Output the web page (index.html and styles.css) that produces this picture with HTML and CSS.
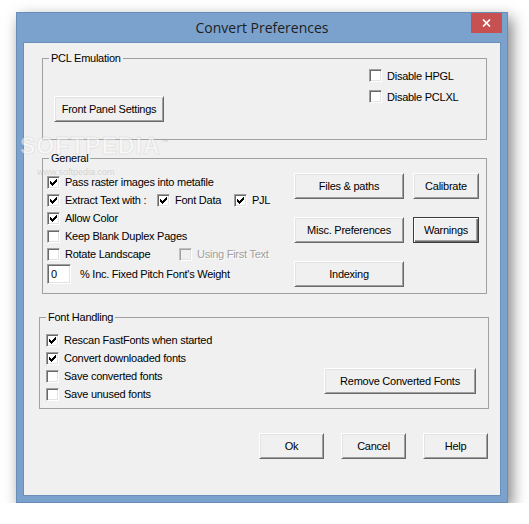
FILE: index.html
```html
<!DOCTYPE html>
<html lang="en">
    <head>
        <meta charset="UTF-8" />
        <meta name="viewport" content="width=device-width, initial-scale=1.0" />
        <title>Convert Preferences</title>
        <link rel="stylesheet" href="styles.css">
    </head>
    <body>
        <!-- dialog window -->
        <div class="window">
            <div class="titlebar">
                <span></span>
                <h1 class="title">Convert Preferences</h1>
                <a href="#" class="close-btn">
                    <svg width="9" height="8" viewBox="0 0 9 8">
                        <path d="M1 0.5L8 7.5M8 0.5L1 7.5" stroke="#fff" stroke-width="1.7" />
                    </svg>
                </a>
            </div>

            <div class="client">
                <!-- PCL Emulation -->
                <div class="group pcl">
                    <span class="group-label">PCL Emulation</span>
                    <button class="btn front-btn">Front Panel Settings</button>
                    <div class="pcl-opts">
                        <label class="chk"><span class="box"></span>Disable HPGL</label>
                        <label class="chk"><span class="box"></span>Disable PCLXL</label>
                    </div>
                </div>

                <!-- General -->
                <div class="group general">
                    <span class="group-label">General</span>
                    <div class="gen-list">
                        <label class="chk"><span class="box on"><svg class="tick" viewBox="0 0 7 7"><path d="M0 2h1v3H0zM1 3h1v3H1zM2 4h1v3H2zM3 3h1v3H3zM4 2h1v3H4zM5 1h1v3H5zM6 0h1v3H6z" /></svg></span>Pass raster images into metafile</label>
                        <div class="chk-row">
                            <label class="chk extract"><span class="box on"><svg class="tick" viewBox="0 0 7 7"><path d="M0 2h1v3H0zM1 3h1v3H1zM2 4h1v3H2zM3 3h1v3H3zM4 2h1v3H4zM5 1h1v3H5zM6 0h1v3H6z" /></svg></span>Extract Text with :</label>
                            <label class="chk font-data"><span class="box on"><svg class="tick" viewBox="0 0 7 7"><path d="M0 2h1v3H0zM1 3h1v3H1zM2 4h1v3H2zM3 3h1v3H3zM4 2h1v3H4zM5 1h1v3H5zM6 0h1v3H6z" /></svg></span>Font Data</label>
                            <label class="chk"><span class="box on"><svg class="tick" viewBox="0 0 7 7"><path d="M0 2h1v3H0zM1 3h1v3H1zM2 4h1v3H2zM3 3h1v3H3zM4 2h1v3H4zM5 1h1v3H5zM6 0h1v3H6z" /></svg></span>PJL</label>
                        </div>
                        <label class="chk"><span class="box on"><svg class="tick" viewBox="0 0 7 7"><path d="M0 2h1v3H0zM1 3h1v3H1zM2 4h1v3H2zM3 3h1v3H3zM4 2h1v3H4zM5 1h1v3H5zM6 0h1v3H6z" /></svg></span>Allow Color</label>
                        <label class="chk"><span class="box"></span>Keep Blank Duplex Pages</label>
                        <div class="chk-row">
                            <label class="chk rotate"><span class="box"></span>Rotate Landscape</label>
                            <label class="chk disabled"><span class="box dim"></span>Using First Text</label>
                        </div>
                        <div class="edit-row">
                            <span class="edit">0</span>
                            <span>% Inc. Fixed Pitch Font's Weight</span>
                        </div>
                    </div>
                    <div class="gen-btns">
                        <button class="btn">Files &amp; paths</button>
                        <button class="btn">Calibrate</button>
                        <button class="btn">Misc. Preferences</button>
                        <button class="btn default">Warnings</button>
                        <button class="btn">Indexing</button>
                    </div>
                </div>

                <!-- Font Handling -->
                <div class="group fonts">
                    <span class="group-label">Font Handling</span>
                    <div class="fonts-list">
                        <label class="chk"><span class="box on"><svg class="tick" viewBox="0 0 7 7"><path d="M0 2h1v3H0zM1 3h1v3H1zM2 4h1v3H2zM3 3h1v3H3zM4 2h1v3H4zM5 1h1v3H5zM6 0h1v3H6z" /></svg></span>Rescan FastFonts when started</label>
                        <label class="chk"><span class="box on"><svg class="tick" viewBox="0 0 7 7"><path d="M0 2h1v3H0zM1 3h1v3H1zM2 4h1v3H2zM3 3h1v3H3zM4 2h1v3H4zM5 1h1v3H5zM6 0h1v3H6z" /></svg></span>Convert downloaded fonts</label>
                        <label class="chk"><span class="box"></span>Save converted fonts</label>
                        <label class="chk"><span class="box"></span>Save unused fonts</label>
                    </div>
                    <button class="btn remove-btn">Remove Converted Fonts</button>
                </div>

                <!-- Ok / Cancel / Help -->
                <div class="dlg-btns">
                    <button class="btn">Ok</button>
                    <button class="btn">Cancel</button>
                    <button class="btn">Help</button>
                </div>
            </div>
        </div>

        <!-- watermark over the dialog -->
        <div class="watermark">SOFTPEDIA<sup>™</sup></div>
        <div class="watermark-url">www.softpedia.com</div>
    </body>
</html>
```

FILE: styles.css
```css
html,
body {
    margin: 0px;
    padding: 0px;
}

body {
    background: #fff;
    font-family: "Liberation Sans", Arial, sans-serif;
    font-size: 11px;
    letter-spacing: -0.25px;
    color: #000;
}

/* window frame */
.window {
    box-sizing: border-box;
    width: 492px;
    height: 491px;
    margin: 12px 0 0 16px;
    padding: 0 6px 6px;
    border: 1px solid #6a8db6;
    background: #7ba2cc;
    box-shadow: 4px 6px 14px rgba(0, 0, 0, 0.5);
    display: flex;
    flex-direction: column;
}

.titlebar {
    height: 29px;
    display: grid;
    grid-template-columns: 31px 1fr 31px;
}

.title {
    margin: 0;
    font-family: "Open Sans", "Noto Sans", sans-serif;
    font-weight: 400;
    font-size: 14px;
    letter-spacing: 0;
    line-height: 29px;
    text-align: center;
    color: #1e1e1e;
}

.close-btn {
    justify-self: end;
    width: 31px;
    height: 20px;
    margin-right: -1px;
    background: #c75050;
    display: flex;
    align-items: center;
    justify-content: center;
}

/* client area */
.client {
    flex: 1;
    box-sizing: border-box;
    border: 1px solid #6b8fb9;
    background: #f0f0f0;
}

/* group boxes */
.group {
    position: relative;
    box-sizing: border-box;
    border: 1px solid #a0a0a0;
    display: flex;
}

.group-label {
    position: absolute;
    top: -7px;
    left: 6px;
    padding: 0 2px;
    line-height: 13px;
    background: #f0f0f0;
}

.pcl {
    width: 445px;
    height: 82px;
    margin: 15px 0 0 18px;
    padding: 10px 0 0 11px;
}

.general {
    width: 445px;
    height: 136px;
    margin: 18px 0 0 18px;
    padding: 14px 0 0 4px;
}

.fonts {
    width: 450px;
    height: 92px;
    margin: 23px 0 0 15px;
    padding: 13px 0 0 6px;
}

/* buttons */
.btn {
    box-sizing: border-box;
    height: 26px;
    padding: 0;
    font: inherit;
    letter-spacing: inherit;
    color: #000;
    background: #f0f0f0;
    border: 1px solid;
    border-color: #fff #696969 #696969 #fff;
    box-shadow: inset 1px 1px #e3e3e3, inset -1px -1px #a0a0a0;
}

.btn.default {
    border-color: #3c3c3c;
    box-shadow: inset 1px 1px #fff, inset -1px -1px #696969, inset -2px -2px #a0a0a0;
}

.front-btn {
    width: 110px;
    margin-top: 27px;
}

/* checkboxes */
.chk {
    display: flex;
    align-items: center;
    gap: 5px;
    height: 18px;
    white-space: nowrap;
}

.box {
    flex: none;
    box-sizing: border-box;
    width: 13px;
    height: 13px;
    background: #fff;
    border: 1px solid;
    border-color: #a0a0a0 #fff #fff #a0a0a0;
    box-shadow: inset 1px 1px #696969, inset -1px -1px #e3e3e3;
    display: flex;
    align-items: center;
    justify-content: center;
}

.box.dim {
    background: #f0f0f0;
    border-color: #c0c0c0 #fff #fff #c0c0c0;
    box-shadow: inset 1px 1px #a0a0a0, inset -1px -1px #e3e3e3;
}

.tick {
    width: 7px;
    height: 7px;
    fill: #000;
    shape-rendering: crispEdges;
}

.chk.disabled {
    color: #a0a0a0;
    text-shadow: 1px 1px #fff;
}

.pcl-opts {
    margin-left: 205px;
    display: flex;
    flex-direction: column;
    gap: 8px;
}

.pcl-opts .chk {
    height: 13px;
}

/* general */
.gen-list {
    width: 247px;
}

.chk-row {
    display: flex;
    align-items: center;
    height: 18px;
}

.extract {
    width: 110px;
}

.font-data {
    width: 77px;
}

.rotate {
    width: 132px;
}

.edit-row {
    display: flex;
    align-items: center;
    gap: 9px;
    height: 20px;
    margin-top: 1px;
}

.edit {
    box-sizing: border-box;
    width: 24px;
    height: 20px;
    padding-left: 3px;
    line-height: 18px;
    background: #fff;
    border: 1px solid;
    border-color: #a0a0a0 #fff #fff #a0a0a0;
    box-shadow: inset 1px 1px #696969, inset -1px -1px #e3e3e3;
}

.gen-btns {
    display: grid;
    grid-template-columns: 110px 66px;
    grid-auto-rows: 26px;
    gap: 18px 9px;
    align-content: start;
}

/* font handling */
.fonts-list {
    width: 278px;
}

.remove-btn {
    width: 152px;
    margin-top: 37px;
}

/* bottom buttons */
.dlg-btns {
    display: flex;
    justify-content: flex-end;
    gap: 17px;
    margin: 24px 12px 0 0;
}

.dlg-btns .btn {
    width: 65px;
}

/* softpedia watermark */
.watermark {
    position: absolute;
    left: 20px;
    top: 133px;
    font-family: "Liberation Sans", sans-serif;
    font-weight: 700;
    font-size: 23px;
    letter-spacing: 1px;
    color: rgba(255, 255, 255, 0.55);
    -webkit-text-stroke: 1px rgba(120, 120, 120, 0.15);
}

.watermark sup {
    font-size: 8px;
    -webkit-text-stroke: 0;
    color: rgba(150, 150, 150, 0.3);
}

.watermark-url {
    position: absolute;
    left: 37px;
    top: 167px;
    font-size: 9px;
    letter-spacing: 0;
    color: rgba(150, 150, 150, 0.35);
}
```
